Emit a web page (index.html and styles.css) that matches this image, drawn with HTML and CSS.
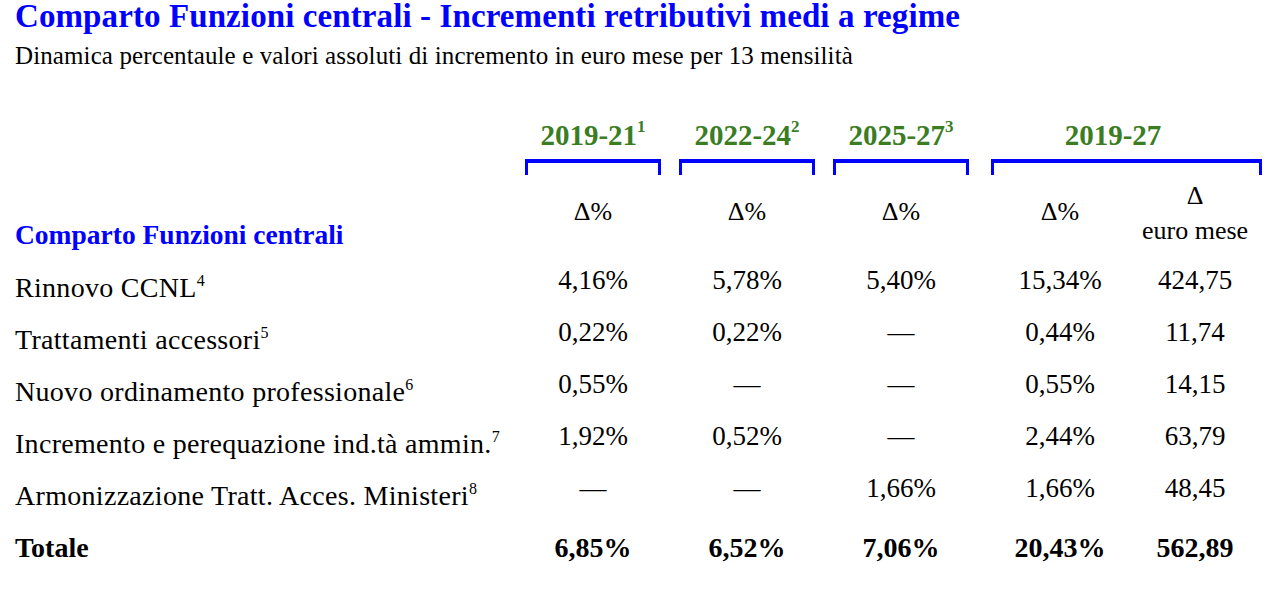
FILE: index.html
```html
<!DOCTYPE html>
<html lang="it">
<head>
<meta charset="utf-8">
<title>Comparto Funzioni centrali</title>
<link rel="stylesheet" href="styles.css">
</head>
<body>
<div class="page">
  <h1 class="title">Comparto Funzioni centrali - Incrementi retributivi medi a regime</h1>
  <p class="subtitle">Dinamica percentaule e valori assoluti di incremento in euro mese per 13 mensilità</p>

  <div class="table">
    <div class="row head-row">
      <div></div>
      <div class="period"><span class="period-label">2019-21<sup>1</sup></span><span class="bracket"></span></div>
      <div class="period"><span class="period-label">2022-24<sup>2</sup></span><span class="bracket"></span></div>
      <div class="period"><span class="period-label">2025-27<sup>3</sup></span><span class="bracket"></span></div>
      <div class="period period-wide"><span class="period-label">2019-27</span><span class="bracket"></span></div>
    </div>

    <div class="row sub-row">
      <div class="section">Comparto Funzioni centrali</div>
      <div class="unit">Δ%</div>
      <div class="unit">Δ%</div>
      <div class="unit">Δ%</div>
      <div class="unit">Δ%</div>
      <div class="unit-stack">Δ<br>euro mese</div>
    </div>

    <div class="body">
      <div class="row data">
        <div class="label">Rinnovo CCNL<sup>4</sup></div>
        <div class="val">4,16%</div>
        <div class="val">5,78%</div>
        <div class="val">5,40%</div>
        <div class="val">15,34%</div>
        <div class="val">424,75</div>
      </div>
      <div class="row data">
        <div class="label">Trattamenti accessori<sup>5</sup></div>
        <div class="val">0,22%</div>
        <div class="val">0,22%</div>
        <div class="val">—</div>
        <div class="val">0,44%</div>
        <div class="val">11,74</div>
      </div>
      <div class="row data">
        <div class="label">Nuovo ordinamento professionale<sup>6</sup></div>
        <div class="val">0,55%</div>
        <div class="val">—</div>
        <div class="val">—</div>
        <div class="val">0,55%</div>
        <div class="val">14,15</div>
      </div>
      <div class="row data">
        <div class="label">Incremento e perequazione ind.tà ammin.<sup>7</sup></div>
        <div class="val">1,92%</div>
        <div class="val">0,52%</div>
        <div class="val">—</div>
        <div class="val">2,44%</div>
        <div class="val">63,79</div>
      </div>
      <div class="row data">
        <div class="label">Armonizzazione Tratt. Acces. Ministeri<sup>8</sup></div>
        <div class="val">—</div>
        <div class="val">—</div>
        <div class="val">1,66%</div>
        <div class="val">1,66%</div>
        <div class="val">48,45</div>
      </div>
      <div class="row data total">
        <div class="label">Totale</div>
        <div class="val">6,85%</div>
        <div class="val">6,52%</div>
        <div class="val">7,06%</div>
        <div class="val">20,43%</div>
        <div class="val">562,89</div>
      </div>
    </div>
  </div>
</div>
</body>
</html>
```

FILE: styles.css
```css
html, body {
  margin: 0;
  padding: 0;
  background: #ffffff;
}

.page {
  font-family: "Liberation Serif", "Times New Roman", serif;
  color: #000000;
  padding-left: 15px;
}

.title {
  margin: -2px 0 0 0;
  font-size: 33px;
  line-height: 36px;
  font-weight: bold;
  letter-spacing: 0.1px;
  color: #0000ff;
  white-space: nowrap;
}

.subtitle {
  margin: 9px 0 0 0;
  font-size: 25px;
  line-height: 25px;
  letter-spacing: 0.11px;
  white-space: nowrap;
}

.row {
  display: grid;
  grid-template-columns: 501px 154px 154px 154px 164px 106px;
}

/* period headers with brackets */
.head-row {
  padding-top: 53px;
}

.period {
  display: flex;
  flex-direction: column;
  align-items: center;
}

.period-wide {
  grid-column: span 2;
}

.period-label {
  font-size: 29px;
  line-height: 29px;
  font-weight: bold;
  color: #3b7d23;
  white-space: nowrap;
}

.period-label sup {
  font-size: 17px;
  line-height: 0;
  vertical-align: 13px;
}

.bracket {
  display: block;
  align-self: stretch;
  margin: 9px 9px 0 9px;
  height: 12px;
  border-top: 4px solid #0000ff;
  border-left: 3px solid #0000ff;
  border-right: 3px solid #0000ff;
}

.period-wide .bracket {
  margin-left: 13px;
  margin-right: -14px;
}

/* unit row */
.sub-row {
  height: 75px;
  font-size: 26px;
}

.section {
  align-self: end;
  padding-bottom: 2px;
  font-size: 27.5px;
  line-height: 27px;
  font-weight: bold;
  color: #0000ff;
  white-space: nowrap;
}

.unit {
  padding-top: 24px;
  line-height: 26px;
  text-align: center;
}

.unit-stack {
  padding-top: 3px;
  line-height: 35px;
  text-align: center;
  white-space: nowrap;
}

/* data rows */
.body {
  padding-top: 12px;
}

.data {
  height: 52px;
  font-size: 27px;
}

.label {
  font-size: 28px;
  line-height: 52px;
  letter-spacing: 0.3px;
  white-space: nowrap;
}

.label sup {
  font-size: 16px;
  line-height: 0;
  letter-spacing: 0;
  vertical-align: 11px;
}

.val {
  line-height: 36px;
  text-align: center;
  white-space: nowrap;
}

.total {
  font-weight: bold;
}

.total .label {
  letter-spacing: 0;
}

.total .val {
  font-size: 28px;
  line-height: 52px;
}
```
